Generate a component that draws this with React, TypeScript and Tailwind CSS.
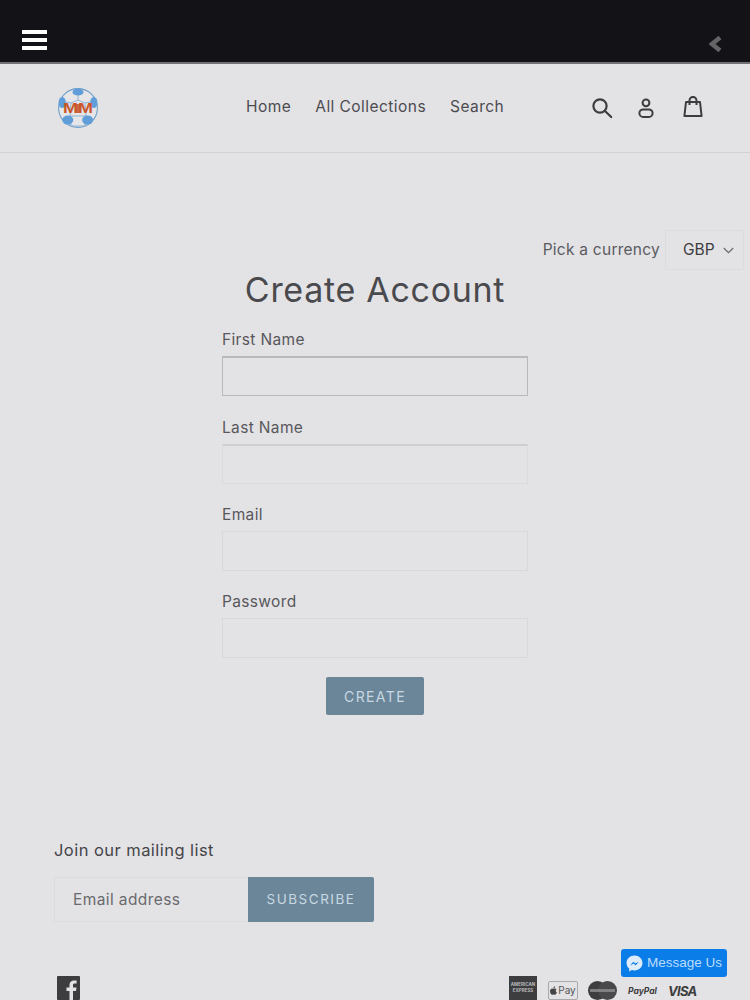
import React from 'react';

const Field = (props: { label: string; strong?: boolean; mid?: boolean; mt: string }) => {
    const { label, strong, mid, mt } = props;
    const border = strong
        ? 'border-[#b9b9bb] border-t-2 border-t-[#b9b9bb]'
        : mid
          ? 'border-[#dbdbdd] border-t-2 border-t-[#cfcfd1]'
          : 'border-[#d8d8da]';
    return (
        <div className={`flex w-[306px] flex-col ${mt}`}>
            <label className="h-[27px] text-[15.5px] leading-[21px] tracking-[0.35px] text-[#58585c]">
                {label}
            </label>
            <div className={`h-[40px] border bg-[#e3e2e5] ${border}`}></div>
        </div>
    );
};

const SearchIcon = () => (
    <svg width="22" height="22" viewBox="0 0 22 22" fill="none" stroke="#3d3d40" strokeWidth="2.2">
        <circle cx="9" cy="9" r="6.6" />
        <path d="M14 14l6.2 6" strokeLinecap="round" />
    </svg>
);

const UserIcon = () => (
    <svg width="18" height="21" viewBox="0 0 18 21" fill="none" stroke="#3d3d40" strokeWidth="2">
        <circle cx="9" cy="4.800" r="3.400" />
        <rect x="2.400" y="11.400" width="13.200" height="7.600" rx="3.800" />
    </svg>
);

const BagIcon = () => (
    <svg width="20" height="21" viewBox="0 0 20 21" fill="none" stroke="#3d3d40" strokeWidth="2">
        <path d="M3 6h14l1.600 14H1.400z" strokeLinejoin="round" />
        <path d="M6.500 9V4.400a3.500 3.500 0 0 1 7 0V9" />
    </svg>
);

const Logo = () => (
    <svg width="42" height="42" viewBox="0 0 42 42">
        <circle cx="21" cy="21" r="19.400" fill="#e6e6e8" stroke="#6f9fc9" strokeWidth="1.100" />
        <g stroke="#8fb4d6" strokeWidth="1" fill="none">
            <path d="M21 4v9M9 15l5 1 7-3 7 3 5-1M14 16l-1 13M28 16l1 13M13 29l-2 5M29 29l2 5M13 29h16M11 36l5 3h10l5-3" />
        </g>
        <g fill="#5f9ed8">
            <ellipse cx="21" cy="5" rx="5.500" ry="3.600" />
            <ellipse cx="5.200" cy="15.500" rx="3.600" ry="5.500" />
            <ellipse cx="36.800" cy="15.500" rx="3.600" ry="5.500" />
            <ellipse cx="10.800" cy="33" rx="5.500" ry="4.600" />
            <ellipse cx="30.600" cy="33" rx="5.500" ry="4.600" />
        </g>
        <rect x="18" y="17" width="6" height="9" fill="#c8552a" opacity="0.85" />
        <text
            x="21"
            y="26"
            textAnchor="middle"
            fontSize="14"
            fontWeight="700"
            fontFamily="'Liberation Sans', sans-serif"
            fill="#c9562a"
            textLength="30"
            lengthAdjust="spacingAndGlyphs"
        >
            MM
        </text>
    </svg>
);

const Payments = () => (
    <div className="flex h-[24px] items-start">
        <div className="flex h-[24px] w-[28px] flex-col items-center justify-center overflow-hidden bg-[#3d3d40] text-[4.500px] leading-[6px] font-bold whitespace-nowrap text-[#b9b9bb]">
            <span>AMERICAN</span>
            <span>EXPRESS</span>
        </div>
        <div className="mt-[5px] ml-[11px] flex h-[19px] w-[30px] items-center justify-center gap-[1px] rounded-[2px] border border-[#a9a9ab] text-[10px] text-[#555558]">
            <svg width="7" height="9" viewBox="0 0 14 17" fill="#444447">
                <path d="M11.500 9c0-2 1.600-3 1.700-3-1-1.400-2.500-1.600-3-1.600-1.300-.1-2.500.8-3.200.8s-1.700-.8-2.800-.8C2.800 4.400 0 6 0 9.800 0 13 2.500 17 4.300 17c.9 0 1.500-.7 2.800-.7s1.800.7 2.800.7c1.900 0 3.500-3.400 3.900-4.600-.1 0-2.300-.9-2.300-3.400zM9.300 2.800c.6-.8 1-1.800.9-2.800-.9 0-2 .6-2.600 1.400-.6.700-1 1.700-.9 2.700 1 0 2-.5 2.600-1.300z" />
            </svg>
            <span>Pay</span>
        </div>
        <svg className="mt-[5px] ml-[10px]" width="29" height="19" viewBox="0 0 29 19">
            <circle cx="9.500" cy="9.500" r="9.500" fill="#3d3d40" />
            <circle cx="19.500" cy="9.500" r="9.500" fill="#49494c" />
            <rect x="2" y="8" width="25" height="3" fill="#9a9a9c" opacity="0.7" />
        </svg>
        <span className="mt-[8px] ml-[11px] w-[29px] text-[8.500px] leading-[14px] font-bold whitespace-nowrap text-[#3d3d40] italic">
            PayPal
        </span>
        <span className="mt-[5px] ml-[11px] w-[28px] text-[13px] leading-[20px] font-bold tracking-[-0.7px] text-[#3d3d40] italic">
            VISA
        </span>
    </div>
);

const App = () => {
    return (
        <div className="relative h-[1000px] w-[750px] overflow-hidden bg-[#e3e2e5] font-['Inter',sans-serif]">
            <div className="flex h-[64px] items-center justify-between border-b-2 border-[#727274] bg-[#131216] pt-[18px] pr-[28px] pl-[22px]">
                <div className="flex w-[25px] flex-col gap-[3.500px]">
                    <div className="h-[4.500px] bg-white"></div>
                    <div className="h-[4.500px] bg-white"></div>
                    <div className="h-[4.500px] bg-white"></div>
                </div>
                <svg className="mt-[8px]" width="13" height="16" viewBox="0 0 13 16">
                    <path d="M11 1.500L3 8l8 6.500" fill="none" stroke="#656568" strokeWidth="4.500" />
                </svg>
            </div>

            <header className="flex h-[89px] items-center border-b border-[#d2d2d4] pr-[47px] pl-[57px]">
                <div className="w-[189px]">
                    <Logo />
                </div>
                <nav className="mt-[-2px] flex gap-[24px] text-[15.500px] tracking-[0.45px] text-[#4c4c50]">
                    <span>Home</span>
                    <span>All Collections</span>
                    <span>Search</span>
                </nav>
                <div className="ml-auto flex items-center">
                    <SearchIcon />
                    <div className="ml-[24px]">
                        <UserIcon />
                    </div>
                    <div className="mt-[-4px] ml-[28px]">
                        <BagIcon />
                    </div>
                </div>
            </header>

            <main className="flex flex-col items-center">
                <div className="mt-[77px] flex w-full items-center justify-end gap-[5px] pr-[6px]">
                    <span className="text-[15.500px] tracking-[0.25px] text-[#5b5b5f]">
                        Pick a currency
                    </span>
                    <div className="flex h-[40px] w-[79px] items-center gap-[8px] border border-[#dcdcde] pl-[17px] text-[15.500px] text-[#3d3d40]">
                        <span>GBP</span>
                        <svg width="11" height="7" viewBox="0 0 11 7" fill="none" stroke="#666669" strokeWidth="1.100">
                            <path d="M.8 1l4.700 4.700L10.200 1" />
                        </svg>
                    </div>
                </div>
                <h1 className="mt-[-2px] text-[34px] leading-[44px] tracking-[0.7px] text-[#4a4a4e]">
                    Create Account
                </h1>
                <div className="mt-[17px]">
                    <Field label="First Name" strong mt="" />
                    <Field label="Last Name" mid mt="mt-[21px]" />
                    <Field label="Email" mt="mt-[20px]" />
                    <Field label="Password" mt="mt-[20px]" />
                </div>
                <button className="mt-[19px] h-[38px] w-[98px] rounded-[2px] bg-[#6b8699] text-[14px] tracking-[1.400px] text-[#c8d8e2]">
                    CREATE
                </button>
            </main>

            <footer className="mt-[124px] pr-[54px] pl-[54px]">
                <h2 className="text-[16.500px] leading-[22px] tracking-[0.45px] text-[#454549]">
                    Join our mailing list
                </h2>
                <div className="mt-[16px] flex h-[45px] w-[320px]">
                    <div className="flex w-[194px] items-center border border-r-0 border-[#dcdcde] pl-[18px] text-[15.500px] tracking-[0.4px] text-[#6a6a6e]">
                        Email address
                    </div>
                    <button className="w-[126px] rounded-r-[2px] bg-[#6b8699] text-[13.500px] tracking-[1.500px] text-[#c8d8e2]">
                        SUBSCRIBE
                    </button>
                </div>
                <div className="mt-[54px] flex items-start justify-between">
                    <svg className="ml-[3px]" width="23" height="24" viewBox="0 0 23 24">
                        <rect width="23" height="24" rx="1" fill="#3d3d40" />
                        <path d="M16 24v-9h3l.5-3.500H16V9.300c0-1 .3-1.700 1.800-1.700h1.800V4.500c-.3 0-1.400-.1-2.600-.1-2.700 0-4.500 1.600-4.500 4.600v2.500H9.500V15h3v9z" fill="#e3e2e5" />
                    </svg>
                    <Payments />
                </div>
            </footer>

            <div className="absolute top-[949px] left-[621px] flex h-[28px] w-[106px] items-center gap-[4px] rounded-[3px] bg-[#0b7de8] pl-[5px] font-['Liberation_Sans',sans-serif] text-[13.500px] whitespace-nowrap text-[#b9dcfb]">
                <svg width="17" height="17" viewBox="0 0 16 16">
                    <path d="M8 .5C3.800.500.500 3.600.500 7.500c0 2.100.9 3.900 2.500 5.200v2.800l2.500-1.400c.8.200 1.600.4 2.500.4 4.200 0 7.500-3.100 7.500-7S12.200.500 8 .500z" fill="#dcecfb" />
                    <path d="M3.800 9.800L7 6.300l1.700 1.700 3.400-1.700-3.100 3.500L7.300 8z" fill="#0b7de8" />
                </svg>
                <span>Message Us</span>
            </div>
        </div>
    );
};

export default App;
